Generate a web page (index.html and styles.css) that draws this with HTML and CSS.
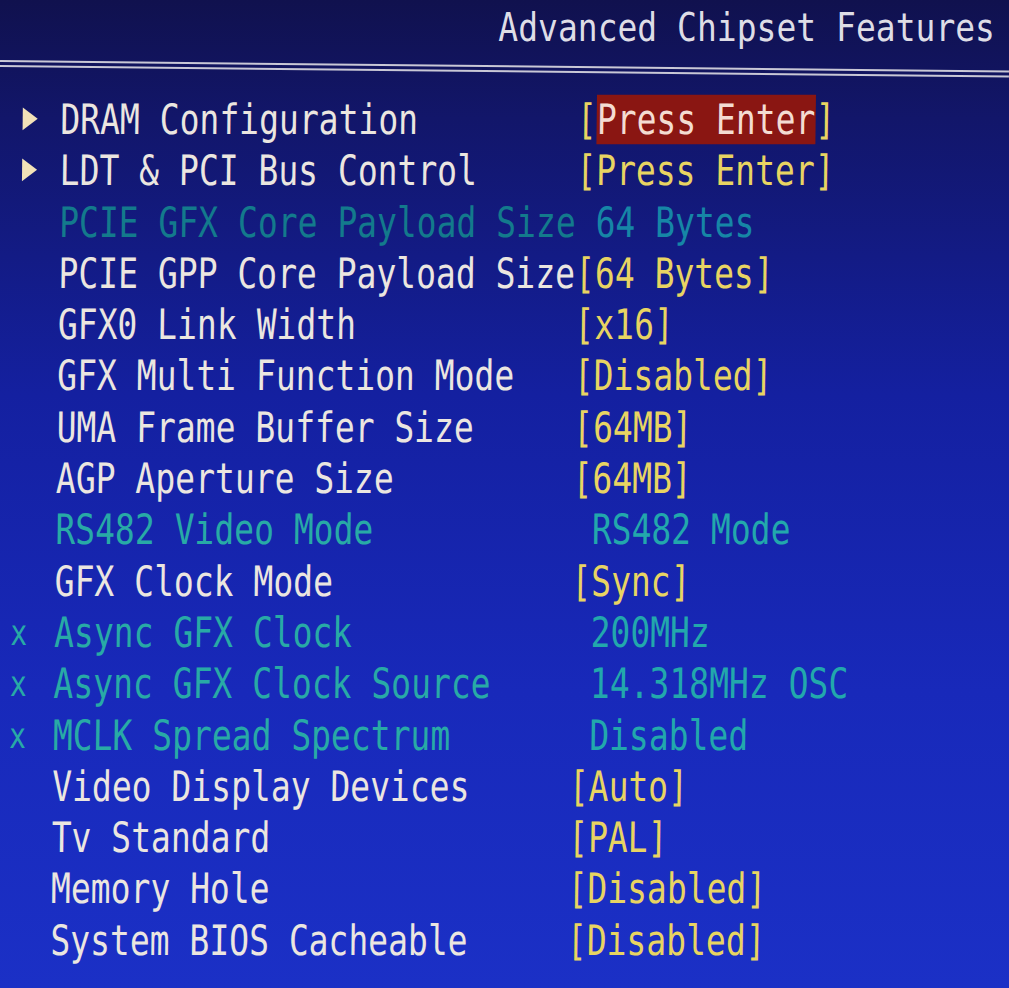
FILE: index.html
```html
<!DOCTYPE html>
<html lang="en">
<head>
    <meta charset="UTF-8">
    <title>Advanced Chipset Features</title>
    <link rel="stylesheet" href="styles.css">
</head>
<body>
    <div class="screen">
        <div class="header">
            <h1 class="title">Advanced Chipset Features</h1>
        </div>
        <div class="rule"></div>

        <div class="menu">
            <div class="row">
                <span class="mark"><span class="arrow"></span></span>
                <span class="label">DRAM Configuration</span>
                <span class="value">[<span class="selected">Press Enter</span>]</span>
            </div>
            <div class="row">
                <span class="mark"><span class="arrow"></span></span>
                <span class="label">LDT &amp; PCI Bus Control</span>
                <span class="value">[Press Enter]</span>
            </div>
            <div class="row off dark">
                <span class="mark"></span>
                <span class="label">PCIE GFX Core Payload Size</span>
                <span class="value">&nbsp;64 Bytes</span>
            </div>
            <div class="row">
                <span class="mark"></span>
                <span class="label">PCIE GPP Core Payload Size</span>
                <span class="value">[64 Bytes]</span>
            </div>
            <div class="row">
                <span class="mark"></span>
                <span class="label">GFX0 Link Width</span>
                <span class="value">[x16]</span>
            </div>
            <div class="row">
                <span class="mark"></span>
                <span class="label">GFX Multi Function Mode</span>
                <span class="value">[Disabled]</span>
            </div>
            <div class="row">
                <span class="mark"></span>
                <span class="label">UMA Frame Buffer Size</span>
                <span class="value">[64MB]</span>
            </div>
            <div class="row">
                <span class="mark"></span>
                <span class="label">AGP Aperture Size</span>
                <span class="value">[64MB]</span>
            </div>
            <div class="row off">
                <span class="mark"></span>
                <span class="label">RS482 Video Mode</span>
                <span class="value">&nbsp;RS482 Mode</span>
            </div>
            <div class="row">
                <span class="mark"></span>
                <span class="label">GFX Clock Mode</span>
                <span class="value">[Sync]</span>
            </div>
            <div class="row off">
                <span class="mark">x</span>
                <span class="label">Async GFX Clock</span>
                <span class="value">&nbsp;200MHz</span>
            </div>
            <div class="row off">
                <span class="mark">x</span>
                <span class="label">Async GFX Clock Source</span>
                <span class="value">&nbsp;14.318MHz OSC</span>
            </div>
            <div class="row off">
                <span class="mark">x</span>
                <span class="label">MCLK Spread Spectrum</span>
                <span class="value">&nbsp;Disabled</span>
            </div>
            <div class="row">
                <span class="mark"></span>
                <span class="label">Video Display Devices</span>
                <span class="value">[Auto]</span>
            </div>
            <div class="row">
                <span class="mark"></span>
                <span class="label">Tv Standard</span>
                <span class="value">[PAL]</span>
            </div>
            <div class="row">
                <span class="mark"></span>
                <span class="label">Memory Hole</span>
                <span class="value">[Disabled]</span>
            </div>
            <div class="row">
                <span class="mark"></span>
                <span class="label">System BIOS Cacheable</span>
                <span class="value">[Disabled]</span>
            </div>
        </div>
    </div>
</body>
</html>
```

FILE: styles.css
```css
html, body {
    margin: 0;
    height: 100%;
}

body {
    background: linear-gradient(180deg, #10114e 0%, #12166a 12%, #1420a0 40%, #1829ba 70%, #1b30c6 100%);
    font-family: "DejaVu Sans Mono", monospace;
    font-size: 33px;
    color: #ebe6e0;
    overflow: hidden;
}

.screen {
    width: 1009px;
    height: 988px;
}

.header {
    height: 54px;
    display: flex;
    justify-content: flex-end;
    align-items: center;
    padding-right: 14px;
}

.title {
    margin: 0;
    font-size: 33px;
    font-weight: normal;
    color: #dedde6;
    transform: scaleY(1.2);
}

/* double line under the title, the photo is a bit tilted */
.rule {
    height: 3px;
    border-top: 2px solid #c9c8d6;
    border-bottom: 2px solid #c9c8d6;
    margin-top: 6px;
    transform: rotate(0.6deg);
    transform-origin: left center;
}

.menu {
    margin-top: 27px;
    padding-left: 21px;
    transform: skewX(-0.7deg);
    transform-origin: left top;
}

.row {
    display: grid;
    grid-template-columns: 2ch 26ch auto;
    height: 51.3px;
    line-height: 51.3px;
    white-space: pre;
    transform: scaleY(1.27);
}

.mark {
    position: relative;
    font-size: 28px;
    left: -4px;
}

.arrow {
    position: absolute;
    left: 6px;
    top: 16px;
    width: 0;
    height: 0;
    border-top: 9px solid transparent;
    border-bottom: 9px solid transparent;
    border-left: 15px solid #f2e2b8;
}

.value {
    color: #e8d462;
}

.selected {
    background-color: #8a1612;
    color: #f4dcd2;
}

.off {
    color: #28aaa6;
}

.off .value {
    color: #22a8ac;
}

.dark .label {
    color: #137a8c;
}

.dark .value {
    color: #1686a6;
}
```
